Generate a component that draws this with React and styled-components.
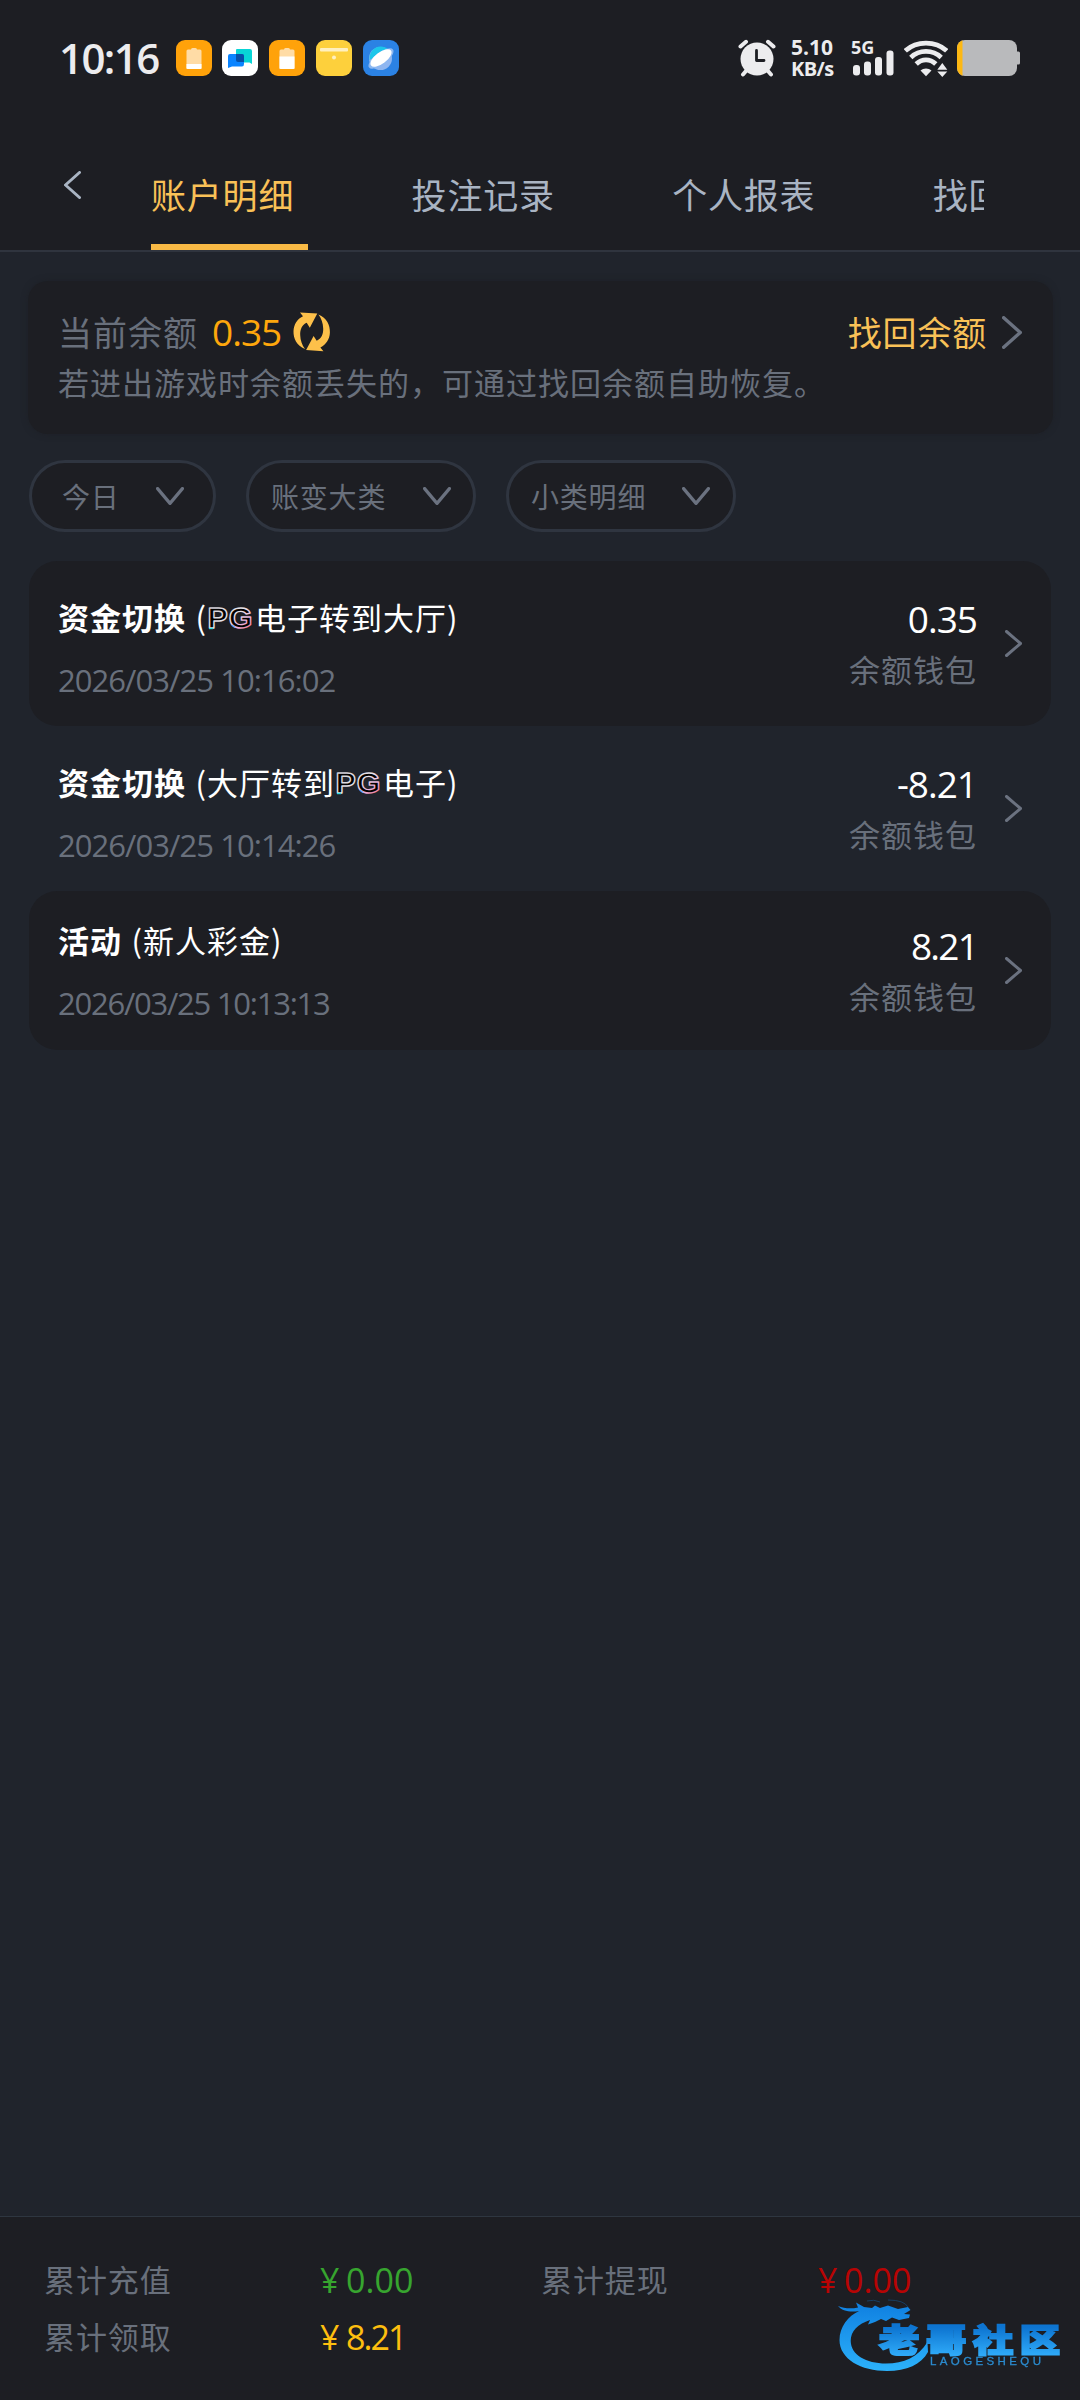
import React, { useState } from 'react';
import styled, { createGlobalStyle } from 'styled-components';

const tabs = ['账户明细', '投注记录', '个人报表', '找回余额'];

const filters = [
  { label: '今日', width: 187, padLeft: 30, padRight: 29 },
  { label: '账变大类', width: 230, padLeft: 22, padRight: 22.5 },
  { label: '小类明细', width: 230, padLeft: 22, padRight: 23 },
];

const records = [
  { type: '资金切换', before: '(', logo: true, after: '电子转到大厅)', time: '2026/03/25 10:16:02', amount: '0.35', wallet: '余额钱包', filled: true, height: 165 },
  { type: '资金切换', before: '(大厅转到', logo: true, after: '电子)', time: '2026/03/25 10:14:26', amount: '-8.21', wallet: '余额钱包', height: 165 },
  { type: '活动', before: '(新人彩金)', time: '2026/03/25 10:13:13', timeTrack: -1.25, amount: '8.21', amountTrack: -1.8, wallet: '余额钱包', filled: true, height: 159 },
];

const totals = [
  { label: '累计充值', value: '0.00', color: '#37a52f', track: 0.1 },
  { label: '累计提现', value: '0.00', color: '#b80404', track: 0.1 },
  { label: '累计领取', value: '8.21', color: '#fdbf0f', track: -1.9 },
];

const Chevron = ({ dir = 'right', w, h, stroke = 3, color = '#6b7280' }) => {
  const p = stroke / 2;
  const points = {
    right: `${p},${p} ${w - p},${h / 2} ${p},${h - p}`,
    left: `${w - p},${p} ${p},${h / 2} ${w - p},${h - p}`,
    down: `${p},${p} ${w / 2},${h - p} ${w - p},${p}`,
  };
  return (
    <Icon width={w} height={h} viewBox={`0 0 ${w} ${h}`}>
      <polyline points={points[dir]} fill="none" stroke={color} strokeWidth={stroke} strokeLinecap="round" strokeLinejoin="round" />
    </Icon>
  );
};

const arrow = 'M12 37C3.5 33.5 .3 26.5 .5 19C.8 12.5 4 7 10 4.2L7 .4L24.3 1.6L16.8 15.7L13.7 10.8C9 12.8 7 17.5 7.2 23C7.4 28.5 9 33 12 37Z';

const RefreshIcon = () => (
  <Icon width="38" height="40" viewBox="0 0 38 40">
    <g fill="#fdc04a">
      <path d={arrow} />
      <path transform="rotate(180 18.7 19.8)" d={arrow} />
    </g>
  </Icon>
);

const AlarmIcon = () => (
  <Icon width="38" height="38" viewBox="0 0 38 38">
    <g stroke="#ececee" strokeLinecap="round" fill="none" strokeWidth="4">
      <path d="M2.5 7.5L8 2.8M35.5 7.5L30 2.8" />
      <path d="M8 32L5 35.5M30 32L33 35.5" />
    </g>
    <circle cx="19" cy="20" r="16.5" fill="#ececee" />
    <path d="M18.5 11.5V21.5H26" stroke="#1d1e23" strokeWidth="2.8" fill="none" strokeLinecap="round" strokeLinejoin="round" />
  </Icon>
);

const SignalBars = () => (
  <Icon width="41" height="26" viewBox="0 0 41 26">
    <g fill="#ececee">
      <rect x="0" y="15" width="7" height="10.5" rx="3" />
      <rect x="11" y="11.5" width="7" height="14" rx="3" />
      <rect x="22" y="7" width="7" height="18.5" rx="3" />
      <rect x="33.5" y="0.5" width="7" height="25" rx="3" />
    </g>
  </Icon>
);

const WifiIcon = () => (
  <Icon width="44" height="38" viewBox="0 0 44 38">
    <g stroke="#ececee" fill="none" strokeWidth="4.8">
      <path d="M1.3 11.8C12.5 1.5 31.5 1.5 42.7 11.8" />
      <path d="M6.8 18.4C15.3 10.4 28.7 10.4 37.2 18.4" />
      <path d="M12.2 25C18 19.5 26 19.5 31.8 25" />
    </g>
    <path d="M16.5 31.5C19.5 28.8 24.5 28.8 27.5 31.5L22 37.3Z" fill="#ececee" />
    <path d="M33.3 30.7L38.3 24L43.3 30.7ZM33.3 32.5L38.3 38L43.3 32.5Z" fill="#ececee" />
  </Icon>
);

const BatteryIcon = () => (
  <Icon width="64" height="36" viewBox="0 0 64 36">
    <clipPath id="cell"><rect width="60" height="36" rx="8" /></clipPath>
    <path d="M59 11.5H61.5Q63 11.5 63 13V23Q63 24.5 61.5 24.5H59Z" fill="#b9babc" />
    <g clipPath="url(#cell)">
      <rect width="60" height="36" fill="#b9babc" />
      <rect width="5.5" height="36" fill="#fdb813" />
    </g>
  </Icon>
);

const BatteryApp = ({ level }) => (
  <AppIcon color="#ffa20a">
    <svg width="36" height="36" viewBox="0 0 36 36">
      <path d="M15 9.5Q15 8 16.5 8H19.5Q21 8 21 9.5H24Q25.5 9.5 25.5 11V29H10.5V11Q10.5 9.5 12 9.5Z" fill="#ffdca6" />
      <path d={`M10.5 ${level}H25.5V27.5Q25.5 29 24 29H12Q10.5 29 10.5 27.5Z`} fill="#fff" />
    </svg>
  </AppIcon>
);

const PgLogo = () => (
  <PgIcon width="47" height="26" viewBox="0 0 47 26">
    <defs>
      <linearGradient id="pg" x1="0" y1="0" x2="1" y2="1">
        <stop offset="0" stopColor="#c9c9cf" />
        <stop offset="0.5" stopColor="#e5e5ea" />
        <stop offset="0.72" stopColor="#e9b0dc" />
        <stop offset="1" stopColor="#ff4a4a" />
      </linearGradient>
    </defs>
    <text x="0.5" y="24" fontFamily="'Liberation Sans', sans-serif" fontWeight="700" fontSize="30" textLength="46" lengthAdjust="spacingAndGlyphs" fill="#000" stroke="url(#pg)" strokeWidth="1.4" strokeLinejoin="round">PG</text>
    <path d="M2 24.5H6" stroke="#34e0e6" strokeWidth="1.4" />
    <path d="M25 21L28 23.5" stroke="#5aa6ff" strokeWidth="1.3" />
  </PgIcon>
);

const SiteMark = () => (
  <Mark width="240" height="90" viewBox="0 0 240 90">
    <defs>
      <linearGradient id="ring" x1="0" y1="0" x2="0" y2="1">
        <stop offset="0" stopColor="#0f7fe0" />
        <stop offset="1" stopColor="#2cb2fb" />
      </linearGradient>
      <linearGradient id="word" x1="0" y1="0" x2="0" y2="1">
        <stop offset="0.25" stopColor="#0d74d0" />
        <stop offset="0.85" stopColor="#2ea9f8" />
      </linearGradient>
    </defs>
    {/* dragon curled into a ring */}
    <path fill="url(#ring)" d="M8 7C14 9.5 21 10 28 8.5L26 3.5L34 8L42 9L45 6.5L50 9L58 6.5L68 10L78 8L80.5 11L74 15L80 15.5L79 19L69 21L62 18.5L56 22L51 20L45 23L38 25.5L40 21C28 25 20.7 32 20.7 42C21 56 36 64.5 56 64.5C74 64.5 88 58 97.5 43L98 53C91 65.5 77 72 57 72C31 72 9.5 60 9.5 41C9.5 28 18 17 29 12C20 13.5 12 12 8 7Z" />
    <path fill="none" stroke="#173f63" strokeWidth="1" d="M37 2Q44 0 50 3M58 1Q74 1 78 8" />
    <text x="0" y="53.5" transform="translate(49 0) scale(1.28 1)" fontFamily="'Noto Sans CJK SC', sans-serif" fontWeight="900" fontSize="31.5" letterSpacing="5.2" fill="url(#word)" stroke="url(#word)" strokeWidth="2">老哥社区</text>
    <text x="100" y="66" fontFamily="'Liberation Sans', sans-serif" fontSize="11.5" textLength="111" fill="#2b8bce" stroke="#2b8bce" strokeWidth="0.3">LAOGESHEQU</text>
  </Mark>
);

const App = () => {
  const [active, setActive] = useState(0);

  return (
    <>
      <GlobalStyle />
      <Page>
        <StatusBar>
          <Clock>10:16</Clock>
          <AppIcons>
            <BatteryApp level={24} />
            <AppIcon color="#fff">
              <svg width="36" height="36" viewBox="0 0 36 36">
                <path d="M14.5 9H28Q30 9 30 11V24L27.5 22.5H16Q14 22.5 14 20.5V10Z" fill="#08d5d6" />
                <path d="M8 14H20Q22 14 22 16V24Q22 26.5 20 26.5H10L6 28V16Q6 14 8 14Z" fill="#0a84ff" />
                <path d="M14 14H20Q22 14 22 16V22H16Q14 22 14 20Z" fill="#0650a8" />
              </svg>
            </AppIcon>
            <BatteryApp level={16.5} />
            <AppIcon color="#fdd03c">
              <svg width="36" height="36" viewBox="0 0 36 36">
                <rect x="4" y="8" width="28" height="3.5" rx="1" fill="#fff0bf" />
                <circle cx="18" cy="17.5" r="2" fill="#fff0bf" />
              </svg>
            </AppIcon>
            <AppIcon color="#2b82e4">
              <svg width="36" height="36" viewBox="0 0 36 36">
                <circle cx="17.5" cy="18.5" r="11.5" fill="#8fb6f0" />
                <path d="M6.5 20A11.5 11.5 0 0 1 26 10Z" fill="#1cc6ea" />
                <ellipse cx="18" cy="18.5" rx="15" ry="6" transform="rotate(-37 18 18.5)" fill="#8db8f1" />
                <ellipse cx="18" cy="18" rx="12.5" ry="5.7" transform="rotate(-37 18 18)" fill="#fff" />
              </svg>
            </AppIcon>
          </AppIcons>
          <StatusRight>
            <AlarmIcon />
            <NetSpeed><span>5.10</span><span>KB/s</span></NetSpeed>
            <Signal>
              <Network>5G</Network>
              <SignalBars />
            </Signal>
            <WifiIcon />
            <BatteryIcon />
          </StatusRight>
        </StatusBar>

        <TabBar>
          <Back><Chevron dir="left" w={17} h={28} color="#a9b4c3" /></Back>
          <TabScroll>
            {tabs.map((tab, i) => (
              <Tab key={tab} $active={i === active} onClick={() => setActive(i)}>{tab}</Tab>
            ))}
          </TabScroll>
        </TabBar>

        <BalanceCard>
          <BalanceRow>
            <BalanceLabel>当前余额</BalanceLabel>
            <BalanceValue>0.35</BalanceValue>
            <RefreshIcon />
            <Recover>
              找回余额
              <Chevron w={20} h={33} stroke={3.4} />
            </Recover>
          </BalanceRow>
          <BalanceTip>若进出游戏时余额丢失的，可通过找回余额自助恢复。</BalanceTip>
        </BalanceCard>

        <Filters>
          {filters.map((f) => (
            <Filter key={f.label} $width={f.width} $left={f.padLeft} $right={f.padRight}>
              {f.label}
              <Chevron dir="down" w={28} h={18} stroke={3.2} />
            </Filter>
          ))}
        </Filters>

        <List>
          {records.map((r) => (
            <Record key={r.time} $filled={r.filled} $height={r.height}>
              <RecordMain $logo={r.logo}>
                <RecordTitle>
                  <RecordType>{r.type}</RecordType>
                  {r.before}
                  {r.logo && <PgLogo />}
                  {r.after}
                </RecordTitle>
                <RecordTime $track={r.timeTrack}>{r.time}</RecordTime>
              </RecordMain>
              <RecordSide>
                <Amount $track={r.amountTrack}>{r.amount}</Amount>
                <Wallet>{r.wallet}</Wallet>
              </RecordSide>
              <Chevron w={17} h={27} />
            </Record>
          ))}
        </List>

        <Footer>
          {totals.map((t) => (
            <React.Fragment key={t.label}>
              <TotalLabel>{t.label}</TotalLabel>
              <TotalValue color={t.color} $track={t.track}><Yen>¥</Yen>{t.value}</TotalValue>
            </React.Fragment>
          ))}
          <SiteMark />
        </Footer>
      </Page>
    </>
  );
};

export default App;

const GlobalStyle = createGlobalStyle`
  body {
    margin: 0;
    background: #20242c;
    font-family: 'Noto Sans CJK SC', sans-serif;
  }
  * {
    box-sizing: border-box;
  }
`;

const Icon = styled.svg`
  display: block;
  flex: none;
`;

const Page = styled.div`
  width: 1080px;
  height: 2400px;
  display: flex;
  flex-direction: column;
  background: #20242c;
  overflow: hidden;
`;

const StatusBar = styled.div`
  height: 116px;
  flex: none;
  padding: 0 59px;
  display: flex;
  align-items: center;
  background: #1d1e23;
  color: #ececee;
  font-family: 'Open Sans', sans-serif;
`;

const Clock = styled.div`
  width: 116.5px;
  font-size: 42px;
  line-height: 50px;
  font-weight: 600;
  letter-spacing: -1.6px;
`;

const AppIcons = styled.div`
  display: flex;
  gap: 10.8px;
`;

const AppIcon = styled.div`
  width: 36px;
  height: 36px;
  border-radius: 9px;
  background: ${(props) => props.color};
  overflow: hidden;

  svg {
    display: block;
  }
`;

const StatusRight = styled.div`
  margin-left: auto;
  display: flex;
  align-items: center;

  > svg:first-child {
    margin-right: 15px;
  }
  > svg:last-child {
    margin-left: 9px;
  }
`;

const NetSpeed = styled.div`
  width: 60px;
  display: flex;
  flex-direction: column;
  font-size: 21px;
  line-height: 22px;
  font-weight: 700;

  span:last-child {
    font-size: 20px;
    letter-spacing: -0.6px;
  }
`;

const Signal = styled.div`
  position: relative;
  width: 53px;
  height: 36px;
  padding-left: 2px;
  display: flex;
  align-items: flex-end;
`;

const Network = styled.span`
  position: absolute;
  left: 0;
  top: -2px;
  font-size: 18px;
  line-height: 18px;
  font-weight: 700;
`;

const TabBar = styled.div`
  height: 136px;
  flex: none;
  padding-right: 96px;
  display: flex;
  background: #1d1e23;
  border-bottom: 2px solid #2f343e;
`;

const Back = styled.div`
  width: 151px;
  flex: none;
  padding: 54.5px 0 0 64px;
`;

const TabScroll = styled.div`
  flex: 1;
  display: flex;
  gap: 103.6px;
  overflow: hidden;
`;

const Tab = styled.div`
  width: 157px;
  flex: none;
  padding-top: 53px;
  font-size: 35px;
  line-height: 50px;
  letter-spacing: 0.8px;
  color: ${(props) => (props.$active ? '#f9c157' : '#a9b4c3')};
  border-bottom: 6px solid ${(props) => (props.$active ? '#f9ba45' : 'transparent')};
`;

const BalanceCard = styled.div`
  height: 153px;
  flex: none;
  margin: 29px 27px 0 28px;
  padding: 26px 31px 0 30px;
  border-radius: 20px;
  background: #1d1e23;
  box-shadow: 0 0 6px rgba(29, 30, 35, 0.6);
`;

const BalanceRow = styled.div`
  height: 50px;
  display: flex;
  align-items: center;
`;

const BalanceLabel = styled.div`
  width: 154px;
  font-size: 34px;
  line-height: 48px;
  letter-spacing: 1px;
  color: #69707c;
`;

const BalanceValue = styled.div`
  width: 81px;
  font-family: 'Open Sans', sans-serif;
  font-size: 37px;
  line-height: 50px;
  letter-spacing: -1px;
  color: #fea70c;
`;

const Recover = styled.div`
  margin-left: auto;
  display: flex;
  align-items: center;
  gap: 15px;
  font-size: 34px;
  line-height: 48px;
  letter-spacing: 0.8px;
  color: #f9c157;
`;

const BalanceTip = styled.div`
  margin-top: 1px;
  font-size: 31px;
  line-height: 48px;
  letter-spacing: 1px;
  color: #69707c;
`;

const Filters = styled.div`
  height: 72px;
  flex: none;
  margin: 26px 29px 0;
  display: flex;
  gap: 30px;
`;

const Filter = styled.div`
  width: ${(props) => props.$width}px;
  padding: 0 ${(props) => props.$right}px 0 ${(props) => props.$left}px;
  display: flex;
  align-items: center;
  justify-content: space-between;
  border: 3px solid #2f3540;
  border-radius: 36px;
  background: #1d1e23;
  font-size: 28px;
  letter-spacing: 0.8px;
  color: #69707c;
`;

const List = styled.div`
  flex: 1;
  margin: 29px 29px 0;
`;

const Record = styled.div`
  height: ${(props) => props.$height}px;
  padding: 0 29px;
  display: flex;
  align-items: center;
  border-radius: 28px;
  background: ${(props) => (props.$filled ? '#1d1e23' : 'transparent')};
`;

const RecordMain = styled.div`
  flex: 1;
  padding-top: ${(props) => (props.$logo ? '8px' : '0')};
`;

const RecordTitle = styled.div`
  display: flex;
  align-items: center;
  height: 46px;
  font-size: 31px;
  letter-spacing: 1px;
  color: #fff;
`;

const RecordType = styled.b`
  margin-right: 9.5px;
`;

const PgIcon = styled(Icon)`
  margin-right: 1px;
  overflow: visible;
`;

const RecordTime = styled.div`
  margin-top: 18px;
  font-family: 'Open Sans', sans-serif;
  font-size: 31px;
  line-height: 44px;
  letter-spacing: ${(props) => props.$track ?? -0.95}px;
  color: #69707c;
`;

const RecordSide = styled.div`
  margin-right: 28px;
  display: flex;
  flex-direction: column;
  align-items: flex-end;
`;

const Amount = styled.div`
  font-family: 'Open Sans', sans-serif;
  font-size: 37px;
  line-height: 50px;
  letter-spacing: ${(props) => props.$track ?? -1}px;
  color: #fff;
`;

const Wallet = styled.div`
  font-size: 31px;
  line-height: 50px;
  letter-spacing: 1px;
  color: #69707c;
`;

const Footer = styled.div`
  position: relative;
  height: 184px;
  flex: none;
  padding: 34px 0 0 44px;
  display: grid;
  grid-template-columns: 276px 221px 277px 1fr;
  grid-auto-rows: 57px;
  align-items: center;
  background: #1d1e23;
  border-top: 1px solid #2e3640;
`;

const TotalLabel = styled.div`
  padding-bottom: 3px;
  font-size: 31px;
  letter-spacing: 0.9px;
  color: #69707c;
`;

const TotalValue = styled.div`
  display: flex;
  align-items: baseline;
  font-family: 'Open Sans', sans-serif;
  font-size: 34px;
  letter-spacing: ${(props) => props.$track}px;
  color: ${(props) => props.color};
`;

const Yen = styled.span`
  width: 26px;
`;

// site mark floats over the totals
const Mark = styled(Icon)`
  position: absolute;
  left: 830px;
  top: 82px;
  filter: blur(0.6px);
`;
